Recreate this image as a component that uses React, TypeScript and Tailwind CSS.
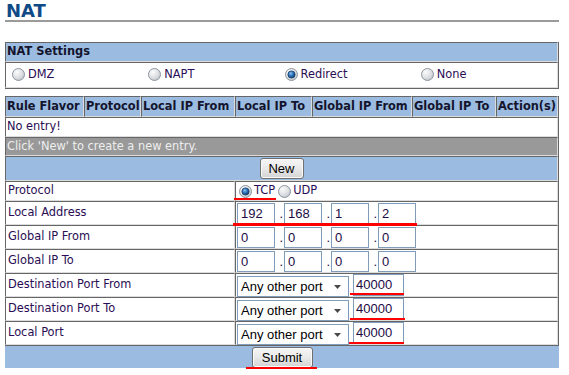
import React, { useId } from "react";

const cell =
  "border-t border-l border-b border-r border-t-[#666] border-l-[#666] border-b-[#dcdcdc] border-r-[#dcdcdc]";
const blue = "bg-[#9bbce0]";
const arial = "font-['Liberation_Sans',Arial,sans-serif]";

function Radio({ checked }: { checked?: boolean }) {
  const id = useId().replace(/:/g, "");
  return (
    <svg width="13" height="13" viewBox="0 0 13 13" className="shrink-0">
      <defs>
        <radialGradient id={`g${id}`} cx="0.35" cy="0.3" r="0.8">
          <stop offset="0" stopColor="#fbfbfb" />
          <stop offset="0.6" stopColor="#dcdfe2" />
          <stop offset="1" stopColor="#b9bec4" />
        </radialGradient>
        <radialGradient id={`b${id}`} cx="0.4" cy="0.35" r="0.7">
          <stop offset="0" stopColor="#8cc4f0" />
          <stop offset="0.5" stopColor="#2a6fb8" />
          <stop offset="1" stopColor="#0b3566" />
        </radialGradient>
      </defs>
      <circle cx="6.5" cy="6.5" r="6" fill={`url(#g${id})`} stroke="#8d96a0" strokeWidth="1" />
      {checked && (
        <circle cx="6.5" cy="6.5" r="3.6" fill={`url(#b${id})`} stroke="#1b3e66" strokeWidth="0.8" />
      )}
    </svg>
  );
}

function Box({ v }: { v: string }) {
  return (
    <div
      className={`w-[38px] h-[21px] border border-[#7f9db9] bg-white ${arial} text-[13px] text-[#1c0b45] pl-[3px] flex items-center`}
    >
      {v}
    </div>
  );
}

function Dot() {
  return (
    <span className={`w-[9px] h-[21px] ${arial} text-[13px] text-[#1c0b45] pr-[1px] flex items-center justify-end`}>
      .
    </span>
  );
}

function IpRow({ vals }: { vals: string[] }) {
  return (
    <div className="flex items-start pt-[1px]">
      <Box v={vals[0]} />
      <Dot />
      <Box v={vals[1]} />
      <Dot />
      <Box v={vals[2]} />
      <Dot />
      <Box v={vals[3]} />
    </div>
  );
}

function PortRow() {
  return (
    <div className="flex items-start">
      <div
        className={`mt-[2px] w-[112px] h-[21px] border border-[#7f9db9] bg-white flex items-center justify-between pl-[3px] pr-[7px] ${arial} text-[13px] text-black`}
      >
        <span>Any other port</span>
        <svg width="7" height="4" viewBox="0 0 7 4">
          <path d="M0 0 L7 0 L3.5 4 Z" fill="#4a4a4a" />
        </svg>
      </div>
      <div
        className={`ml-[4px] w-[51px] h-[22px] border border-[#7f9db9] bg-white flex items-center pl-[2px] ${arial} text-[13px] text-[#1c0b45]`}
      >
        40000
      </div>
    </div>
  );
}

function Btn({ label, w }: { label: string; w: string }) {
  return (
    <div
      className={`${w} h-[21px] border border-[#707070] rounded-[3px] bg-linear-to-b from-[#f6f6f6] via-[#e9e9e9] to-[#d3d3d3] shadow-[inset_0_0_0_1px_#fafafa] flex items-center justify-center ${arial} text-[13px] text-black`}
    >
      {label}
    </div>
  );
}

export default function App() {
  const headers = ["Rule Flavor", "Protocol", "Local IP From", "Local IP To", "Global IP From", "Global IP To", "Action(s)"];
  const rows: { label: string; content: React.ReactNode }[] = [
    { label: "Local Address", content: <IpRow vals={["192", "168", "1", "2"]} /> },
    { label: "Global IP From", content: <IpRow vals={["0", "0", "0", "0"]} /> },
    { label: "Global IP To", content: <IpRow vals={["0", "0", "0", "0"]} /> },
    { label: "Destination Port From", content: <PortRow /> },
    { label: "Destination Port To", content: <PortRow /> },
    { label: "Local Port", content: <PortRow /> },
  ];
  return (
    <div className="relative w-[569px] h-[375px] bg-white overflow-hidden font-['DejaVu_Sans',Verdana,sans-serif] text-[11.4px] text-[#2a0d55]">
      <div className="ml-[5px] w-[554px] h-[22px] border-b-2 border-[#9a9a9a] pt-[1px]">
        <h1 className="text-[18px] leading-[20px] font-bold text-[#0e4a86] pl-[1px]">NAT</h1>
      </div>

      <div className="ml-[5px] mt-[20px] w-[554px] border-r border-b border-[#666]">
        <div className={`${cell} ${blue} h-[20px] font-bold text-[#14142e] flex items-center pl-[1px]`}>NAT Settings</div>
        <div className={`${cell} h-[26px] flex items-center pl-[6px]`}>
          {[
            ["DMZ", false],
            ["NAPT", false],
            ["Redirect", true],
            ["None", false],
          ].map(([l, c]) => (
            <div key={l as string} className="w-[137px] flex items-center gap-[3px]">
              <Radio checked={c as boolean} />
              <span>{l as string}</span>
            </div>
          ))}
        </div>
      </div>

      <div className="ml-[5px] mt-[7px] w-[554px] border-r border-b border-[#666] grid grid-cols-[79px_57px_94px_77px_100px_84px_62px]">
        {headers.map((h) => (
          <div key={h} className={`${cell} ${blue} h-[21px] font-bold text-[#14142e] whitespace-nowrap overflow-hidden flex items-center pl-[1px]`}>
            {h}
          </div>
        ))}
        <div className={`${cell} col-span-7 h-[20px] flex items-center pl-[1px]`}>No entry!</div>
        <div className={`${cell} col-span-7 h-[19px] bg-[#999999] text-[#eeeeee] flex items-center pl-[1px]`}>
          Click 'New' to create a new entry.
        </div>
        <div className={`${cell} ${blue} col-span-7 h-[25px] flex items-center justify-center`}>
          <Btn label="New" w="w-[44px]" />
        </div>

        <div className={`${cell} col-span-3 h-[20px] flex items-center pl-[2px]`}>Protocol</div>
        <div className={`${cell} col-span-4 h-[20px] flex items-center pl-[3px]`}>
          <Radio checked />
          <span className="ml-[2px]">TCP</span>
          <span className="ml-[3px]">
            <Radio />
          </span>
          <span className="ml-[2px]">UDP</span>
        </div>

        {rows.map((r) => (
          <React.Fragment key={r.label}>
            <div className={`${cell} col-span-3 h-[24px] flex items-center pl-[2px]`}>{r.label}</div>
            <div className={`${cell} col-span-4 h-[24px] pl-[1px]`}>{r.content}</div>
          </React.Fragment>
        ))}
      </div>

      <div className={`ml-[5px] w-[554px] h-[22px] ${blue} flex justify-center pt-[1px]`}>
        <Btn label="Submit" w="w-[61px]" />
      </div>

      <div className="absolute left-[234px] top-[198px] w-[42px] h-[2px] bg-[#f00]" />
      <div className="absolute left-[233px] top-[223px] w-[184px] h-[3px] bg-[#f00]" />
      <div className="absolute left-[350px] top-[293px] w-[54px] h-[2px] bg-[#f00]" />
      <div className="absolute left-[350px] top-[318px] w-[55px] h-[2px] bg-[#f00]" />
      <div className="absolute left-[349px] top-[342px] w-[55px] h-[2px] bg-[#f00]" />
      <div className="absolute left-[246px] top-[367px] w-[71px] h-[2px] bg-[#f00]" />
    </div>
  );
}
